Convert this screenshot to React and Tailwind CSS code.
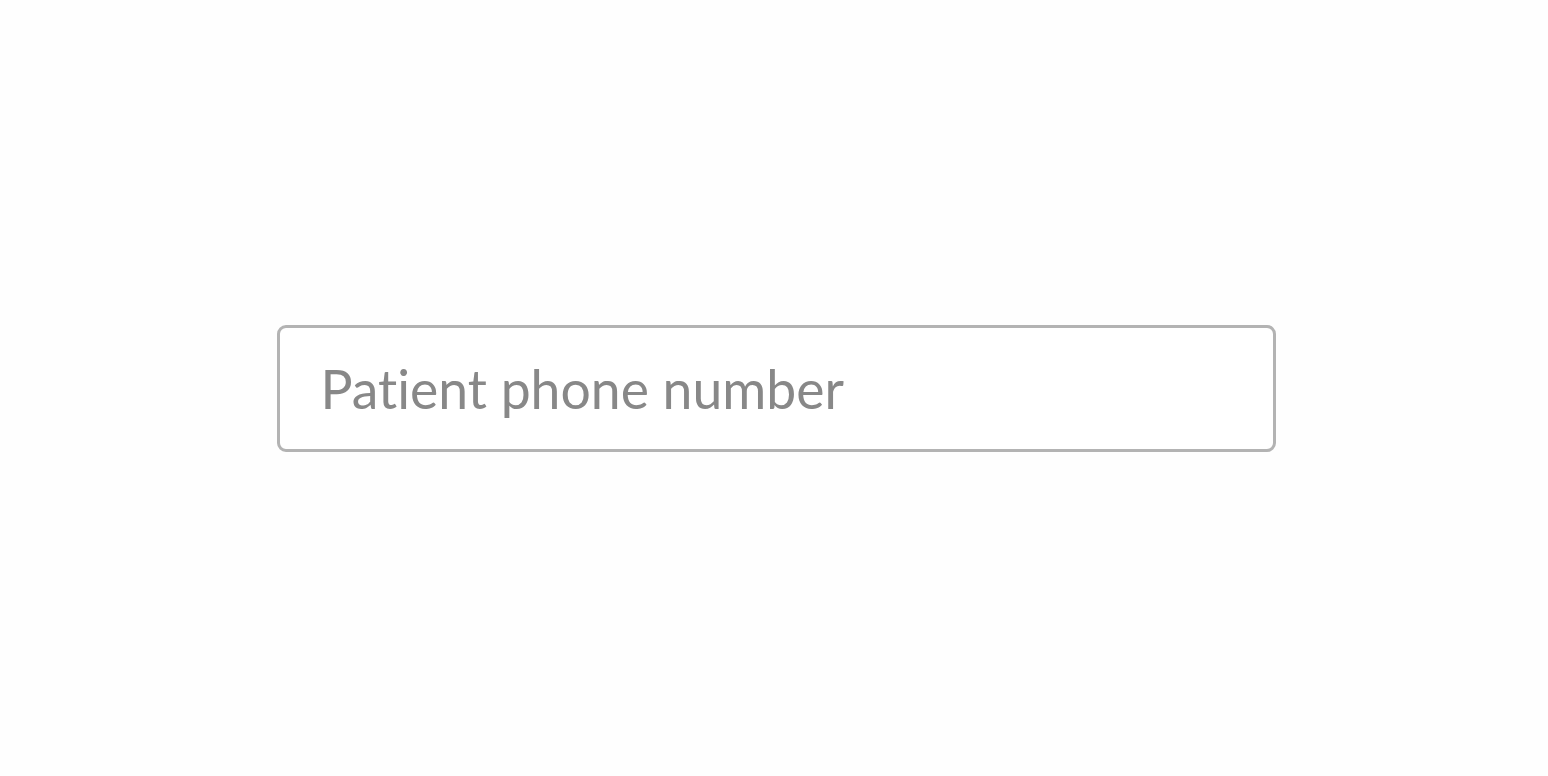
export default function App() {
  return (
    <div className="w-full h-[776px] bg-[#fefefe] flex items-center justify-center pl-[4px]">
      <input
        type="text"
        placeholder="Patient phone number"
        className="w-[999px] h-[127px] border-[3px] border-[#b3b3b3] rounded-[9px] bg-white pl-[41px] text-[53.5px] text-[#888888] placeholder:text-[#888888] outline-none [font-variant-ligatures:none]"
        style={{ fontFamily: 'Lato, sans-serif' }}
      />
    </div>
  );
}
